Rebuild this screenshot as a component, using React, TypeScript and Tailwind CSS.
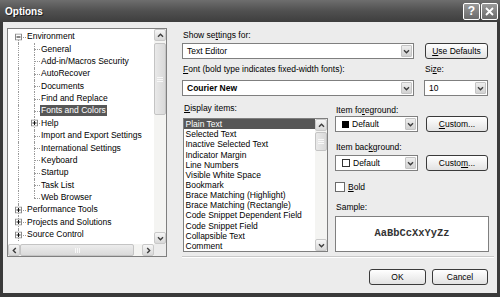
import React from "react";

function Chev({ dir }: { dir: "up" | "down" | "left" | "right" }) {
  if (dir === "up" || dir === "down") {
    const pts = dir === "down" ? "1,1.2 3.5,3.7 6,1.2" : "1,3.8 3.5,1.3 6,3.8";
    return (
      <svg width="7" height="5" viewBox="0 0 7 5">
        <polyline points={pts} fill="none" stroke="#3c3c3c" strokeWidth="1.4" />
      </svg>
    );
  }
  const pts = dir === "right" ? "1.2,1 3.7,3.5 1.2,6" : "3.8,1 1.3,3.5 3.8,6";
  return (
    <svg width="5" height="7" viewBox="0 0 5 7">
      <polyline points={pts} fill="none" stroke="#3c3c3c" strokeWidth="1.4" />
    </svg>
  );
}

function SBtn({ dir }: { dir: "up" | "down" | "left" | "right" }) {
  return (
    <div className="w-[12px] h-[12px] shrink-0 flex items-center justify-center rounded-[2px] border border-[#c9c9c9] bg-gradient-to-b from-[#f6f6f6] to-[#d8d8d8]">
      <Chev dir={dir} />
    </div>
  );
}

function VThumb({ h }: { h: string }) {
  return (
    <div className={`w-[12px] ${h} shrink-0 rounded-[2px] border border-[#c4c4c4] bg-gradient-to-r from-[#e9e9e9] to-[#d9d9d9] flex flex-col items-center justify-center gap-[1px]`}>
      <div className="w-[6px] h-[1px] bg-[#f8f8f8]" />
      <div className="w-[6px] h-[1px] bg-[#f8f8f8]" />
      <div className="w-[6px] h-[1px] bg-[#f8f8f8]" />
    </div>
  );
}

function Expander({ plus }: { plus: boolean }) {
  return (
    <svg width="7" height="7" viewBox="0 0 7 7">
      <rect x="0.5" y="0.5" width="6" height="6" fill="#fff" stroke="#8a8a8a" />
      <line x1="1.5" y1="3.5" x2="5.5" y2="3.5" stroke="#111" />
      {plus && <line x1="3.5" y1="1.5" x2="3.5" y2="5.5" stroke="#111" />}
    </svg>
  );
}

type TItem = { t: string; lvl: number; exp?: "+" | "-"; sel?: boolean; first?: boolean; last?: boolean };

const treeItems: TItem[] = [
  { t: "Environment", lvl: 0, exp: "-", first: true },
  { t: "General", lvl: 1 },
  { t: "Add-in/Macros Security", lvl: 1 },
  { t: "AutoRecover", lvl: 1 },
  { t: "Documents", lvl: 1 },
  { t: "Find and Replace", lvl: 1 },
  { t: "Fonts and Colors", lvl: 1, sel: true },
  { t: "Help", lvl: 1, exp: "+" },
  { t: "Import and Export Settings", lvl: 1 },
  { t: "International Settings", lvl: 1 },
  { t: "Keyboard", lvl: 1 },
  { t: "Startup", lvl: 1 },
  { t: "Task List", lvl: 1 },
  { t: "Web Browser", lvl: 1, last: true },
  { t: "Performance Tools", lvl: 0, exp: "+" },
  { t: "Projects and Solutions", lvl: 0, exp: "+" },
  { t: "Source Control", lvl: 0, exp: "+" },
];

function TreeRow({ it }: { it: TItem }) {
  return (
    <div className="flex h-[12.375px] items-center whitespace-nowrap">
      <div className="relative w-[18px] self-stretch shrink-0">
        <div
          className={
            it.first
              ? "absolute left-[10px] top-1/2 bottom-0 border-l border-dotted border-[#9a9a9a]"
              : "absolute left-[10px] top-0 bottom-0 border-l border-dotted border-[#9a9a9a]"
          }
        />
        {it.lvl === 0 && (
          <>
            <div className="absolute left-[10px] right-0 top-1/2 border-t border-dotted border-[#9a9a9a]" />
            <div className="absolute left-[7px] top-1/2 -translate-y-1/2 flex">
              <Expander plus={it.exp === "+"} />
            </div>
          </>
        )}
      </div>
      {it.lvl === 1 && (
        <div className="relative w-[14px] self-stretch shrink-0">
          <div
            className={
              it.last
                ? "absolute left-[8px] top-0 h-1/2 border-l border-dotted border-[#9a9a9a]"
                : "absolute left-[8px] top-0 bottom-0 border-l border-dotted border-[#9a9a9a]"
            }
          />
          <div className="absolute left-[8px] right-0 top-1/2 border-t border-dotted border-[#9a9a9a]" />
          {it.exp && (
            <div className="absolute left-[5px] top-1/2 -translate-y-1/2 flex">
              <Expander plus={it.exp === "+"} />
            </div>
          )}
        </div>
      )}
      <span
        className={
          it.sel
            ? "bg-[#575757] text-white px-[1px] leading-[11px] h-[11px]"
            : "px-[1px] leading-[11px] h-[11px]"
        }
      >
        {it.t}
      </span>
    </div>
  );
}

function Tree() {
  return (
    <div className="w-[160px] h-[229px] shrink-0 border border-[#7f7f7f] bg-white flex flex-col">
      <div className="flex flex-1 min-h-0">
        <div className="flex-1 overflow-hidden pt-[1.5px]">
          {treeItems.map((it) => (
            <TreeRow key={it.t} it={it} />
          ))}
        </div>
        <div className="w-[12px] bg-[#f4f4f2] flex flex-col">
          <SBtn dir="up" />
          <div className="mt-[2px]">
            <VThumb h="h-[72px]" />
          </div>
          <div className="flex-1" />
          <SBtn dir="down" />
        </div>
      </div>
      <div className="flex h-[12px]">
        <div className="flex-1 flex bg-[#f4f4f2]">
          <SBtn dir="left" />
          <div className="w-[114px] h-[12px] rounded-[2px] border border-[#c4c4c4] bg-gradient-to-b from-[#ececec] to-[#dadada] flex items-center justify-center gap-[1px]">
            <div className="w-[1px] h-[5px] bg-[#f8f8f8]" />
            <div className="w-[1px] h-[5px] bg-[#f8f8f8]" />
            <div className="w-[1px] h-[5px] bg-[#f8f8f8]" />
          </div>
          <div className="flex-1" />
          <SBtn dir="right" />
        </div>
        <div className="w-[12px] bg-[#ececec]" />
      </div>
    </div>
  );
}

function DropBtn() {
  return (
    <div className="w-[11px] h-[12px] m-[1px] shrink-0 rounded-[1px] border border-[#c4c4c4] bg-gradient-to-b from-[#eeeeee] to-[#d2d2d2] flex items-center justify-center">
      <Chev dir="down" />
    </div>
  );
}

function Combo({ className, children }: { className: string; children: React.ReactNode }) {
  return (
    <div className={`h-[16px] border border-[#7f7f7f] bg-white flex items-center ${className}`}>
      <div className="flex-1 flex items-center pl-[4px] whitespace-nowrap overflow-hidden">{children}</div>
      <DropBtn />
    </div>
  );
}

function Btn({ className, children }: { className: string; children: React.ReactNode }) {
  return (
    <div className={`h-[16px] shrink-0 flex items-center justify-center rounded-[3px] border border-[#3a3a3a] bg-gradient-to-b from-white to-[#e2e2e2] whitespace-nowrap ${className}`}>
      {children}
    </div>
  );
}

const listItems = [
  "Plain Text",
  "Selected Text",
  "Inactive Selected Text",
  "Indicator Margin",
  "Line Numbers",
  "Visible White Space",
  "Bookmark",
  "Brace Matching (Highlight)",
  "Brace Matching (Rectangle)",
  "Code Snippet Dependent Field",
  "Code Snippet Field",
  "Collapsible Text",
  "Comment",
];

function U({ children }: { children: React.ReactNode }) {
  return <span className="underline underline-offset-[1px]">{children}</span>;
}

function Right() {
  return (
    <div className="ml-[15px] w-[307px] flex flex-col">
      <div className="mt-[2px] h-[10px] leading-[10px] pl-[1px]">
        Show se<U>t</U>tings for:
      </div>
      <div className="mt-[3px] flex">
        <Combo className="w-[232px]">Text Editor</Combo>
        <Btn className="ml-[11px] w-[63px]">
          <U>U</U>se Defaults
        </Btn>
      </div>
      <div className="mt-[5px] flex">
        <div className="w-[232px] flex flex-col">
          <div className="h-[10px] leading-[10px] pl-[1px]">
            <U>F</U>ont (bold type indicates fixed-width fonts):
          </div>
          <Combo className="mt-[6px] w-[232px]">
            <span className="font-bold">Courier New</span>
          </Combo>
        </div>
        <div className="ml-[10px] w-[64px] flex flex-col">
          <div className="h-[10px] leading-[10px] pl-[1px]">
            Si<U>z</U>e:
          </div>
          <Combo className="mt-[6px] w-[64px]">10</Combo>
        </div>
      </div>
      <div className="mt-[7px] flex">
        <div className="w-[145px] ml-[1px] flex flex-col">
          <div className="h-[10px] leading-[10px] pl-[1px]">
            <U>D</U>isplay items:
          </div>
          <div className="mt-[5px] h-[134px] border border-[#7f7f7f] bg-white flex">
            <div className="flex-1 overflow-hidden">
              {listItems.map((t, i) => (
                <div key={t} className="h-[10.17px] flex items-center whitespace-nowrap">
                  <span
                    className={
                      i === 0
                        ? "flex-1 bg-[#575757] text-white pl-[1.5px] leading-[10px] h-[10px]"
                        : "pl-[1.5px] leading-[10px] h-[10px]"
                    }
                  >
                    {t}
                  </span>
                </div>
              ))}
            </div>
            <div className="w-[12px] bg-[#f4f4f2] flex flex-col">
              <SBtn dir="up" />
              <div className="mt-[1px]">
                <VThumb h="h-[19px]" />
              </div>
              <div className="flex-1" />
              <SBtn dir="down" />
            </div>
          </div>
        </div>
        <div className="ml-[7px] w-[154px] flex flex-col">
          <div className="mt-[2px] h-[10px] leading-[10px] pl-[1px]">
            Item fo<U>r</U>eground:
          </div>
          <div className="mt-[1px] flex">
            <Combo className="w-[83px]">
              <div className="ml-[2px] w-[7px] h-[7px] bg-black" />
              <span className="ml-[3px]">Default</span>
            </Combo>
            <Btn className="ml-[8px] w-[62px]">
              <U>C</U>ustom...
            </Btn>
          </div>
          <div className="mt-[10px] h-[10px] leading-[10px] pl-[1px]">
            Item bac<U>k</U>ground:
          </div>
          <div className="mt-[3px] flex">
            <Combo className="w-[83px]">
              <div className="ml-[2px] w-[8px] h-[8px] bg-white border border-[#333]" />
              <span className="ml-[3px]">Default</span>
            </Combo>
            <Btn className="ml-[8px] w-[62px]">
              Custo<U>m</U>...
            </Btn>
          </div>
          <div className="mt-[11px] flex items-center h-[10px]">
            <div className="w-[10px] h-[10px] border border-[#6a6a6a] bg-white" />
            <span className="ml-[3px]">
              <U>B</U>old
            </span>
          </div>
          <div className="mt-[10px] h-[10px] leading-[10px] pl-[1px]">Sample:</div>
          <div className="mt-[4px] h-[36px] border border-[#7f7f7f] bg-white flex items-center justify-center font-['Liberation_Mono',monospace] font-bold text-[10.4px] text-[#333]">
            AaBbCcXxYyZz
          </div>
        </div>
      </div>
      <div className="mt-[4px] w-[312px] border-t border-[#c9c9c9] border-b border-b-white" />
    </div>
  );
}

function TitleBar() {
  return (
    <div className="h-[22px] shrink-0 flex items-center bg-gradient-to-b from-[#6e6e6e] via-[#505050] to-[#3e3e3e] pl-[5px] pr-[2px]">
      <span className="text-white font-bold text-[10px] [text-shadow:1px_1px_0_#222]">Options</span>
      <div className="flex-1" />
      <div className="w-[17px] h-[17px] rounded-[2px] border border-white bg-gradient-to-b from-[#9a9a9a] to-[#6a6a6a] flex items-center justify-center text-white font-bold text-[12px] leading-none">
        ?
      </div>
      <div className="ml-[1px] w-[17px] h-[17px] rounded-[2px] border border-white bg-gradient-to-b from-[#9a9a9a] to-[#6a6a6a] flex items-center justify-center">
        <svg width="9" height="9" viewBox="0 0 9 9">
          <path d="M1 1 L8 8 M8 1 L1 8" stroke="#fff" strokeWidth="1.8" />
        </svg>
      </div>
    </div>
  );
}

export default function App() {
  return (
    <div className="w-[500px] h-[297px] bg-[#3a3a3a] flex flex-col overflow-hidden font-['Liberation_Sans',Arial,sans-serif] text-[8.5px] text-black">
      <TitleBar />
      <div className="flex-1 mx-[3px] mb-[4px] bg-[#ececec] flex flex-col">
        <div className="flex pt-[6px] pl-[4px]">
          <Tree />
          <Right />
        </div>
        <div className="mt-[11px] flex justify-end pr-[9px]">
          <Btn className="w-[57px]">OK</Btn>
          <Btn className="ml-[6px] w-[56px]">Cancel</Btn>
        </div>
      </div>
    </div>
  );
}
